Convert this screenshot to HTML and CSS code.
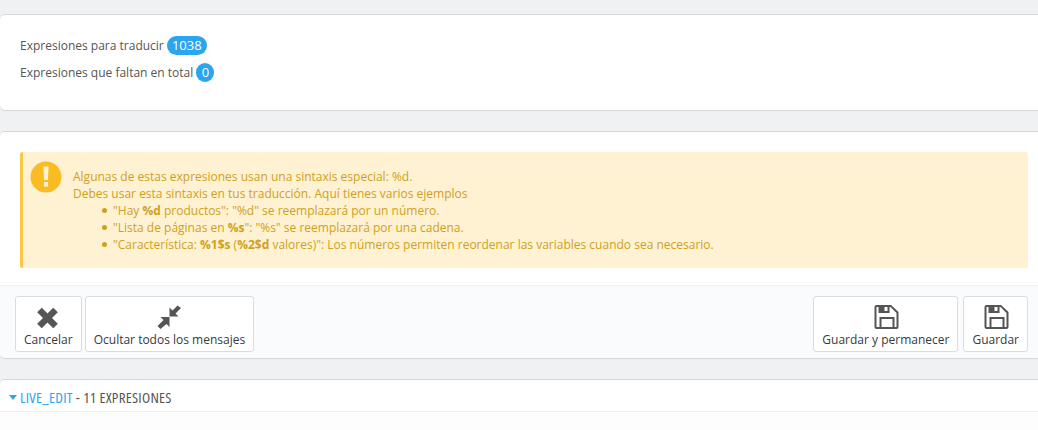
FILE: index.html
```html
<!DOCTYPE html>
<html lang="es">
<head>
<meta charset="utf-8">
<title>Traducciones</title>
<link rel="stylesheet" href="styles.css">
</head>
<body>
<section class="panel stats">
  <p class="stat">Expresiones para traducir <span class="badge">1038</span></p>
  <p class="stat">Expresiones que faltan en total <span class="badge">0</span></p>
</section>
<section class="panel main">
  <div class="alert">
    <svg class="alert-icon" viewBox="0 0 32 32" aria-hidden="true">
      <circle cx="16" cy="16" r="15.5" fill="#fbbb22"/>
      <path d="M13.4 5.5h5.2l-.7 13.5h-3.8z" fill="#fff3d4"/>
      <rect x="13.9" y="21" width="4.2" height="4.6" fill="#fff3d4"/>
    </svg>
    <div class="alert-text">
      Algunas de estas expresiones usan una sintaxis especial: %d.<br>
      Debes usar esta sintaxis en tus traducción. Aquí tienes varios ejemplos
      <ul>
        <li>"Hay <b>%d</b> productos": "%d" se reemplazará por un número.</li>
        <li>"Lista de páginas en <b>%s</b>": "%s" se reemplazará por una cadena.</li>
        <li>"Característica: <b>%1$s</b> (<b>%2$d</b> valores)": Los números permiten reordenar las variables cuando sea necesario.</li>
      </ul>
    </div>
  </div>
  <div class="toolbar">
    <a class="btn btn-cancel">
      <svg class="icon" viewBox="0 0 28 28" aria-hidden="true"><path d="M7.700 3 13.500 8.800 19.300 3 23.500 7.200 17.700 13 23.500 18.800 19.300 23 13.500 17.200 7.700 23 3.500 18.800 9.300 13 3.500 7.200z" fill="#555" stroke="#555" stroke-width=".6" stroke-linejoin="round"/></svg>
      Cancelar
    </a>
    <a class="btn btn-hide">
      <svg class="icon" viewBox="0 0 28 28" aria-hidden="true"><path d="M14.500 11.500V2.500L17.500 5.500 22.500 .5 26 3 20.500 8.500 23.500 11.500zM14.500 12H5.500L8.500 15 2.500 21 5.500 24 11.500 19 14.500 22z" fill="#555"/></svg>
      Ocultar todos los mensajes
    </a>
    <span class="spacer"></span>
    <a class="btn btn-stay">
      <svg class="icon" viewBox="0 0 28 28" aria-hidden="true"><use href="#floppy"/></svg>
      Guardar y permanecer
    </a>
    <a class="btn btn-save">
      <svg class="icon" viewBox="0 0 28 28" aria-hidden="true">
        <path id="floppy" fill-rule="evenodd" d="M4.500 0H19L26.500 7V22a2 2 0 0 1-2 2H4.500a2 2 0 0 1-2-2V2a2 2 0 0 1 2-2zM4.500 2V22H7.500V12H22.500V22H24.500V8L18.500 2H17.500V8H6.500V2zM9.500 14V22H20.500V14zM12.500 2V6H15.500V2z" fill="#555"/>
      </svg>
      Guardar
    </a>
  </div>
</section>
<section class="panel domain">
  <h3 class="domain-head"><span class="caret"></span><a class="domain-link">LIVE_EDIT</a> - 11 EXPRESIONES</h3>
  <div class="domain-body"></div>
</section>
</body>
</html>
```
FILE: styles.css
```css
* { box-sizing: border-box; }
html, body { height: 100%; }
body {
  margin: 0;
  padding-top: 14px;
  overflow: hidden;
  background: #eff1f2;
  color: #555;
  font: 12px/17px "Open Sans", sans-serif;
}
.panel {
  background: #fff;
  border-top: 1px solid #d3d8db;
  border-radius: 5px 0 0 5px;
  box-shadow: 0 1px 1px #d3d8db;
  margin-bottom: 21px;
}
.stats { height: 96px; padding: 21px 20px 0; }
.stat { margin: 0 0 8px; line-height: 19px; white-space: nowrap; }
.badge {
  display: inline-block;
  min-width: 18px;
  padding: 0 5px;
  border-radius: 10px;
  background: #2aa5ee;
  color: #fff;
  font-size: 13px;
  line-height: 19px;
  text-align: center;
}
.main { height: 227px; padding-top: 20px; display: flex; flex-direction: column; }
.alert {
  margin: 0 10px 0 20px;
  height: 116px;
  padding: 16px 10px 14px 10px;
  display: flex;
  background: #fef2d2;
  border-left: 3px solid #fac747;
  border-radius: 3px;
  color: #d0a01c;
}
.alert-icon { width: 32px; height: 32px; margin: -7px 11px 0 -3px; flex: none; }
.alert-text { line-height: 17px; }
.alert ul { margin: 0; padding-left: 40px; list-style: none; }
.alert li { position: relative; }
.alert li::before {
  content: "";
  position: absolute;
  left: -11px;
  top: 6px;
  width: 5px;
  height: 5px;
  border-radius: 50%;
  background: #d0a01c;
}
.toolbar {
  flex: 1;
  margin-top: 17px;
  padding: 10px 10px 6px 15px;
  display: flex;
  gap: 3px;
  background: #fafbfc;
  border-top: 1px solid #eef1f3;
  border-radius: 0 0 0 5px;
}
.spacer { flex: 1; }
.btn {
  display: flex;
  flex-direction: column;
  align-items: center;
  height: 56px;
  padding: 8px 8px 0;
  background: #fff;
  border: 1px solid #dadcde;
  border-radius: 3px;
  color: #363a41;
  line-height: 17px;
  white-space: nowrap;
}
.icon { width: 28px; height: 28px; margin-bottom: -2px; display: block; }
.btn-stay { margin-right: 2px; }
.domain { margin: 0; height: 60px; border-radius: 5px 0 0 0; }
.domain-head {
  margin: 0;
  height: 32px;
  padding-left: 9px;
  border-bottom: 1px solid #eef0f1;
  color: #555;
  font: 500 15px/34px "Open Sans", sans-serif;
  font-stretch: 75%;
  letter-spacing: .25px;
  white-space: nowrap;
}
.caret {
  display: inline-block;
  width: 0;
  height: 0;
  margin: 0 3px 2px 0;
  border: 4px solid transparent;
  border-top: 5px solid #2aa5ee;
  border-bottom: 0;
  vertical-align: middle;
}
.domain-link { color: #2aa5ee; }
.domain-body { height: 20px; background: #fcfdfc; }
```
